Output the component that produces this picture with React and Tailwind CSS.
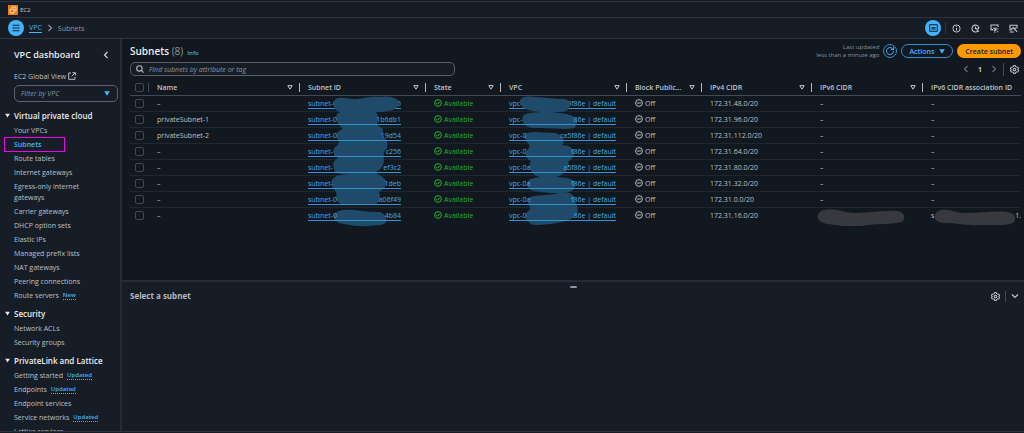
import React from "react";

const sections = [
  {
    title: "Virtual private cloud",
    items: [
      ["Your VPCs"],
      ["Subnets"],
      ["Route tables"],
      ["Internet gateways"],
      ["Egress-only internet gateways"],
      ["Carrier gateways"],
      ["DHCP option sets"],
      ["Elastic IPs"],
      ["Managed prefix lists"],
      ["NAT gateways"],
      ["Peering connections"],
      ["Route servers", "New"],
    ],
  },
  { title: "Security", items: [["Network ACLs"], ["Security groups"]] },
  {
    title: "PrivateLink and Lattice",
    items: [
      ["Getting started", "Updated"],
      ["Endpoints", "Updated"],
      ["Endpoint services"],
      ["Service networks", "Updated"],
      ["Lattice services"],
    ],
  },
];

const columns = [
  "Name",
  "Subnet ID",
  "State",
  "VPC",
  "Block Public...",
  "IPv4 CIDR",
  "IPv6 CIDR",
  "IPv6 CIDR association ID",
];

const rows = [
  { name: "–", id: ["subnet-0", "6"], vpc: ["vpc-", "5f86e | default"], cidr: "172.31.48.0/20" },
  { name: "privateSubnet-1", id: ["subnet-0", "1b6db1"], vpc: ["vpc-", "86e | default"], cidr: "172.31.96.0/20" },
  { name: "privateSubnet-2", id: ["subnet-0", "19d54"], vpc: ["vpc-0", "ca5f86e | default"], cidr: "172.31.112.0/20" },
  { name: "–", id: ["subnet-", "c256"], vpc: ["vpc-0", "f86e | default"], cidr: "172.31.64.0/20" },
  { name: "–", id: ["subnet-", "ef3c2"], vpc: ["vpc-0a", "a5f86e | default"], cidr: "172.31.80.0/20" },
  { name: "–", id: ["subnet-", "1deb"], vpc: ["vpc-0a", "f86e | default"], cidr: "172.31.32.0/20" },
  { name: "–", id: ["subnet-0", "a06f49"], vpc: ["vpc-0a", "f86e | default"], cidr: "172.31.0.0/20" },
  { name: "–", id: ["subnet-0", "4b84"], vpc: ["vpc-0", "86e | default"], cidr: "172.31.16.0/20" },
];

function Triangle({ className }) {
  return (
    <svg viewBox="0 0 6 5" className={className} aria-hidden="true">
      <path d="M0.2 0.3h5.6L3 4.8z" fill="currentColor" />
    </svg>
  );
}

function Gear() {
  return (
    <svg viewBox="0 0 16 16" className="size-[9px]" fill="none" stroke="currentColor" strokeWidth="1.8" strokeLinejoin="round" aria-hidden="true">
      <path d="M6.6 1h2.8l.6 1.9 1.9.8 2.2.2 1 2.6L13.8 8l1.3 1.5-1 2.6-2.2.2-1.9.8-.6 1.9H6.6L6 13.1l-1.9-.8-2.2-.2-1-2.6L2.2 8 .9 6.5l1-2.6 2.2-.2L6 2.9z" />
      <circle cx="8" cy="8" r="2.4" />
    </svg>
  );
}

function Chevron({ d, className }) {
  return (
    <svg viewBox="0 0 8 8" className={className} fill="none" stroke="currentColor" strokeWidth="1.2" aria-hidden="true">
      <path d={d} />
    </svg>
  );
}
const LEFT = "M5.5 1L2.5 4l3 3";
const RIGHT = "M2.5 1l3 3-3 3";
const DOWN = "M1 2.5l3 3 3-3";

function SideNav() {
  return (
    <nav className="w-[122px] shrink-0 overflow-hidden border-r-2 border-[#262c36] bg-[#161d26]">
      <div className="flex h-[31px] items-center justify-between pl-[14px] pr-[10px] pt-px">
        <h2 className="text-[9px] font-semibold leading-3 text-[#ebebf0]">VPC dashboard</h2>
        <button aria-label="Close navigation" className="text-[#d5d7de]">
          <Chevron d={LEFT} className="size-[8px]" />
        </button>
      </div>
      <a href="#global" className="flex h-3 items-center gap-[2px] pl-[14px]">
        EC2 Global View
        <svg viewBox="0 0 8 8" className="size-[8px]" fill="none" stroke="currentColor" aria-hidden="true">
          <path d="M3 1H0.7v6.3H7V5M4.4 0.7h2.9v2.9M7.2 0.8L3.6 4.4" />
        </svg>
      </a>
      <div className="relative mb-[7px] ml-[14px] mr-[2px] mt-[3px]">
        <select
          aria-label="Filter by VPC"
          className="block h-[17px] w-full appearance-none rounded-[5px] border border-[#5a616d] bg-[#161d26] pl-[6px] text-[7px] italic text-[#8c94a1]"
        >
          <option>Filter by VPC</option>
        </select>
        <Triangle className="pointer-events-none absolute right-[8px] top-[6px] h-[5px] w-[6px] text-[#42b4ff]" />
      </div>
      {sections.map((s) => (
        <section key={s.title} className="mb-[6px]">
          <h3>
            <button className="flex h-[12px] items-center gap-1 pl-[5px] text-[8px] font-semibold text-[#ebebf0]">
              <Triangle className="h-[5px] w-[5px]" />
              {s.title}
            </button>
          </h3>
          <ul className="mt-[4px] flex flex-col gap-[3px] pl-[14px] pr-8">
            {s.items.map(([label, tag]) => (
              <li key={label} className="relative flex items-center gap-1">
                <a href="#nav" className={label === "Subnets" ? "font-semibold text-[#42b4ff]" : tag ? "whitespace-nowrap" : ""}>
                  {label}
                </a>
                {tag && (
                  <a href="#new" className="border-b border-dotted border-[#42b4ff] text-[6px] font-semibold leading-[8px] text-[#42b4ff]">
                    {tag}
                  </a>
                )}
                {label === "Subnets" && (
                  <span className="pointer-events-none absolute -left-[10px] -top-[2px] h-[15px] w-[61px] border border-[#f000e8]" />
                )}
              </li>
            ))}
          </ul>
        </section>
      ))}
    </nav>
  );
}

function MaskedLink({ parts, className }) {
  return (
    <a href="#detail" className={"inline-flex justify-between whitespace-nowrap border-b border-[#3291cf] leading-[8px] text-[#42a8ee] " + className}>
      <span>{parts[0]}</span>
      <span>{parts[1]}</span>
    </a>
  );
}

const idMarks =
  "M79 5C81 0 90 2 97 3C105 4 112 0 125 1C136 -1 145 3 144 8C142 15 131 16 121 16C124 20 123 24 122 29C124 31 131 31 127 40C132 42 133 47 132 52C129 55 128 58 129 63C129 69 126 74 121 76C121 79 128 79 131 85C132 92 127 94 124 96C126 102 125 108 119 108L105 109L97 108C90 110 83 109 81 102C83 98 80 94 78 92C76 89 75 84 80 81C84 78 88 79 94 78C87 78 78 78 79 72C77 68 79 64 83 62C78 60 77 55 80 51C83 49 85 48 83 44C80 40 81 36 86 34C90 31 84 32 82 25C80 20 82 16 87 16C80 16 77 10 79 5Z";

function Marks({ kind }) {
  if (kind === "id")
    return (
      <svg viewBox="0 0 126 132" className="pointer-events-none absolute left-0 top-0 h-[132px] w-[126px]" aria-hidden="true">
        <g fill="#204a69">
          <path d={idMarks} transform="translate(-45 0)" />
          <path d="M34 119C36 114 45 113 54 114C62 115 69 116 79 116C85 117 87 122 86 126C83 130 76 129 69 130C58 131 50 129 44 128C37 127 33 124 34 119Z" />
        </g>
      </svg>
    );
  if (kind === "vpc")
    return (
      <svg viewBox="0 0 126 132" className="pointer-events-none absolute left-0 top-0 h-[132px] w-[126px]" aria-hidden="true">
        <g fill="#204a69">
          <path d="M19 7C18 0 27 0 35 1C43 2 51 2 58 3C66 2 70 5 69 10C67 17 60 16 51 16L66 18C76 20 79 28 73 32C67 34 50 32 32 32C22 31 19 22 23 19C27 16 35 17 39 16C30 15 20 13 19 7Z" />
          <path d="M26 37C34 35 42 37 54 37C62 39 65 45 61 49C69 49 74 53 73 59C72 62 69 64 67 66C70 72 65 76 60 79C52 83 43 84 36 80C30 77 26 70 30 65C25 63 23 57 27 53C30 50 28 48 25 45C23 41 22 39 26 37Z" />
          <path d="M28 84C35 80 53 80 65 82C74 83 76 88 73 93C70 97 62 97 49 97C38 96 28 95 27 91C26 88 26 86 28 84Z" />
          <path d="M28 102C33 98 50 100 57 97C66 94 75 98 74 106C78 112 78 119 72 122C59 128 44 129 33 129C25 127 22 119 27 115C32 112 27 110 27 107Z" />
        </g>
      </svg>
    );
  return (
    <svg viewBox="0 0 92 18" className="pointer-events-none absolute left-[5px] top-0 h-[18px] w-[92px]" aria-hidden="true">
      <path d="M1 8C2 0 16 0 28 4C44 7 64 2 80 3C87 4 89 9 86 13C81 17 61 15 44 18C31 20 21 17 11 16C4 15 0 12 1 8Z" fill="#37393e" />
    </svg>
  );
}

function SubnetTable() {
  return (
    <table className="w-full table-fixed border-collapse text-left">
      <colgroup>
        <col className="w-[19px]" />
        <col className="w-[151px]" />
        <col className="w-[126px]" />
        <col className="w-[75px]" />
        <col className="w-[126px]" />
        <col className="w-[75px]" />
        <col className="w-[110px]" />
        <col className="w-[111px]" />
        <col />
      </colgroup>
      <thead>
        <tr className="h-[15px] border-b border-[#434a55]">
          <th className="p-0">
            <div className="flex items-center justify-between border-r border-[#434a55] pl-[5px]">
              <input type="checkbox" aria-label="Select all subnets" className="size-[9px] appearance-none rounded-[2px] border border-[#434a55]" />
            </div>
          </th>
          {columns.map((c, i) => (
            <th key={c} className="p-0 font-semibold text-[#c0c4cc]">
              <div className={"flex h-[9px] items-center justify-between whitespace-nowrap pl-2 " + (i < 7 ? "border-r border-[#b4b8c0] pr-[6px]" : "")}>
                {c}
                {i < 7 && (
                  <svg viewBox="0 0 6 5" className="h-[5px] w-[6px]" fill="none" stroke="currentColor" aria-hidden="true">
                    <path d="M0.8 0.6h4.4L3 4.2z" />
                  </svg>
                )}
              </div>
            </th>
          ))}
        </tr>
      </thead>
      <tbody>
        {rows.map((r, i) => (
          <tr key={r.cidr} className="h-[16px] border-b border-[#20272f] last:border-0">
            <td className="p-0 pl-[5px]">
              <input type="checkbox" aria-label={"Select " + r.cidr} className="block size-[9px] appearance-none rounded-[2px] border border-[#434a55]" />
            </td>
            <td className="p-0 pl-2">{r.name}</td>
            <td className="relative p-0 pl-2">
              <MaskedLink parts={r.id} className="w-[93px]" />
              {i === 0 && <Marks kind="id" />}
            </td>
            <td className="p-0 pl-2 text-[#29ad32]">
              <span className="flex items-center gap-[2px]">
                <svg viewBox="0 0 8 8" className="size-[8px]" fill="none" stroke="currentColor" aria-hidden="true">
                  <circle cx="4" cy="4" r="3.4" />
                  <path d="M2.3 4l1.3 1.3L5.8 2.8" />
                </svg>
                Available
              </span>
            </td>
            <td className="relative p-0 pl-2">
              <MaskedLink parts={r.vpc} className="w-[107px]" />
              {i === 0 && <Marks kind="vpc" />}
            </td>
            <td className="p-0 pl-2">
              <span className="flex items-center gap-[2px]">
                <svg viewBox="0 0 8 8" className="size-[8px]" fill="none" stroke="currentColor" aria-hidden="true">
                  <circle cx="4" cy="4" r="3.4" />
                  <path d="M2.2 4h3.6" />
                </svg>
                Off
              </span>
            </td>
            <td className="p-0 pl-2">{r.cidr}</td>
            <td className="relative p-0 pl-2">{i === 7 ? <Marks kind="gray" /> : "–"}</td>
            <td className="relative p-0 pl-2">
              {i === 7 ? (
                <>
                  <span className="flex justify-between">
                    <span>s</span>
                    <span>1.</span>
                  </span>
                  <svg viewBox="0 0 82 18" className="pointer-events-none absolute left-[11px] top-0 h-[18px] w-[82px]" aria-hidden="true">
                    <path d="M1 8C2 0 13 1 22 4C37 7 57 2 73 4C81 5 82 9 80 14C77 18 61 17 48 17C32 18 23 15 12 15C4 15 0 12 1 8Z" fill="#37393e" />
                  </svg>
                </>
              ) : (
                "–"
              )}
            </td>
          </tr>
        ))}
      </tbody>
    </table>
  );
}

export default function App() {
  return (
    <div className="flex h-screen flex-col overflow-hidden bg-[#161d26] font-['Open_Sans','Noto_Sans',sans-serif] text-[7px] leading-[11px] text-[#bcc0c8]">
      <header className="shrink-0 pt-px">
        <div className="flex h-[17px] items-center gap-[2px] border-y border-[#2d333d] pl-2 pt-px">
          <svg viewBox="0 0 10 10" className="size-[10px]" aria-hidden="true">
            <path d="M0 0h10v10H0z" fill="#ed7b14" />
            <path d="M4 3.2V2h4v4H6.8M2 4h4v4H2z" fill="none" stroke="#fff" strokeWidth="0.7" />
          </svg>
          <a href="#ec2" className="text-[6px] font-medium text-[#c6c6cd]">EC2</a>
        </div>
        <div className="flex h-[21px] items-center justify-between border-b border-[#2d333d] pl-2 pr-[6px]">
          <div className="flex items-center gap-1 text-[#8c94a1]">
            <button aria-label="Open navigation" className="mr-px flex size-[16px] items-center justify-center rounded-full bg-[#42b4ff]">
              <svg viewBox="0 0 8 8" className="size-[8px]" stroke="#161d26" strokeWidth="1.1" aria-hidden="true">
                <path d="M0.5 1.3h7M0.5 4h7M0.5 6.7h7" />
              </svg>
            </button>
            <a href="#vpc" className="border-b border-[#42b4ff] leading-[8px] text-[#42b4ff]">VPC</a>
            <Chevron d={RIGHT} className="size-[8px]" />
            <span>Subnets</span>
          </div>
          <div className="flex items-center text-[#c6c6cd]">
            <button aria-label="Split panel" className="flex size-[16px] items-center justify-center rounded-full bg-[#42b4ff] text-[#161d26]">
              <svg viewBox="0 0 9 8" className="h-[8px] w-[9px]" fill="none" stroke="currentColor" aria-hidden="true">
                <path d="M0.7 0.7h7.6v6.6H0.7zM2.4 5h4.2M2.5 3.7h4" />
              </svg>
            </button>
            <span className="ml-1 h-[12px] w-px bg-[#2f3641]" />
            <button aria-label="Info" className="ml-[6px]">
              <svg viewBox="0 0 9 9" className="size-[9px]" fill="none" stroke="currentColor" aria-hidden="true">
                <circle cx="4.5" cy="4.5" r="3.6" />
                <path d="M4.5 4v2.6M4.5 2.2v1" />
              </svg>
            </button>
            <button aria-label="History" className="ml-[10px]">
              <svg viewBox="0 0 9 9" className="size-[9px]" fill="none" stroke="currentColor" strokeWidth="1.1" aria-hidden="true">
                <path d="M6.9 7.1A3.5 3.5 0 1 1 8 4.6M4.5 2.6v2.1H8M5.6 5.6L8 7.6" />
              </svg>
            </button>
            <button aria-label="Actions tour" className="ml-[10px]">
              <svg viewBox="0 0 9 9" className="size-[9px]" fill="none" stroke="currentColor" strokeWidth="1.1" aria-hidden="true">
                <path d="M8 3V1H1v4.6h2M3.4 3.6L6 6.2M3.4 6.2H6V3.6M7.2 5h1.2M7.2 7.8h1.2M4 8h1.6" />
              </svg>
            </button>
            <button aria-label="Monitoring" className="ml-[10px]">
              <svg viewBox="0 0 9 9" className="size-[9px]" fill="none" stroke="currentColor" strokeWidth="1.1" aria-hidden="true">
                <path d="M3.4 6H1V1.2h7v3.4M2.4 5l1.8-1.4L5.4 5L7 3.6M5.4 5L8.2 7.8M0.8 8h4" />
              </svg>
            </button>
          </div>
        </div>
      </header>

      <div className="flex min-h-0 flex-1">
        <SideNav />
        <div className="flex min-w-0 flex-1 flex-col">
          <main className="min-h-0 flex-1 overflow-hidden bg-[#12181f] pl-2 pr-[3px] pt-1">
            <div className="flex h-[16px] items-center justify-between">
              <div className="flex items-baseline gap-1">
                <h1 className="text-[10px] font-semibold leading-[14px] text-[#ebebf0]">
                  Subnets <span className="font-normal text-[#8c94a1]">(8)</span>
                </h1>
                <a href="#info" className="text-[6px] font-semibold text-[#42a8ee]">Info</a>
              </div>
              <div className="flex items-center gap-1">
                <p className="text-right text-[6px] leading-[8px] text-[#8c929c]">
                  Last updated
                  <br />
                  less than a minute ago
                </p>
                <button aria-label="Refresh" className="flex size-[14px] items-center justify-center rounded-full border border-[#3291cf] text-[#42b4ff]">
                  <svg viewBox="0 0 10 10" className="size-[10px]" fill="none" stroke="currentColor" aria-hidden="true">
                    <path d="M8.5 5.2A3.5 3.5 0 1 1 7.4 2.5L8.4 3.4M8.6 0.8v2.8H5.8" />
                  </svg>
                </button>
                <button className="flex h-[14px] items-center gap-[5px] rounded-full border border-[#3291cf] px-[7px] font-semibold text-[#42b4ff]">
                  Actions
                  <Triangle className="h-[5px] w-[6px]" />
                </button>
                <button className="h-[14px] rounded-full bg-[#ff9900] px-2 font-semibold text-[#161d26]">Create subnet</button>
              </div>
            </div>
            <div className="mt-[3px] flex h-[14px] items-center justify-between">
              <label className="flex h-[14px] w-[325px] items-center gap-[5px] rounded-[5px] border border-[#565d68] bg-[#161d26] px-[5px]">
                <svg viewBox="0 0 8 8" className="size-[8px] text-[#b4b8c0]" fill="none" stroke="currentColor" strokeWidth="1.1" aria-hidden="true">
                  <circle cx="3.4" cy="3.4" r="2.7" />
                  <path d="M5.4 5.4l2.2 2.2" />
                </svg>
                <input
                  aria-label="Find subnets"
                  placeholder="Find subnets by attribute or tag"
                  className="min-w-0 flex-1 bg-transparent italic outline-none placeholder:text-[#8c94a1]"
                />
              </label>
              <div className="flex items-center text-[#656c77]">
                <button aria-label="Previous page"><Chevron d={LEFT} className="size-[8px]" /></button>
                <button className="mx-[8px] font-semibold text-[#ebebf0]">1</button>
                <button aria-label="Next page"><Chevron d={RIGHT} className="size-[8px]" /></button>
                <span className="ml-[5px] mr-[6px] h-[13px] w-px bg-[#434a55]" />
                <button aria-label="Preferences" className="mr-[2px] text-[#c6c6cd]"><Gear /></button>
              </div>
            </div>
            <div className="mt-[4px]">
              <SubnetTable />
            </div>
          </main>
          <section className="h-[151px] shrink-0 border-t-2 border-[#262c36]">
            <div className="mx-auto mt-[4px] h-[2px] w-[7px] rounded-full bg-[#8c94a1]" />
            <div className="flex items-center justify-between pl-2 pr-[5px] pt-[2px]">
              <h2 className="text-[8px] font-bold leading-[12px] text-[#b4b8c0]">Select a subnet</h2>
              <div className="flex items-center text-[#c6c6cd]">
                <button aria-label="Panel preferences"><Gear /></button>
                <span className="mx-[5px] h-[11px] w-px bg-[#434a55]" />
                <button aria-label="Close panel"><Chevron d={DOWN} className="size-[8px]" /></button>
              </div>
            </div>
          </section>
        </div>
      </div>
      <footer className="h-[2px] shrink-0 border-t border-[#2d333d]" />
    </div>
  );
}
